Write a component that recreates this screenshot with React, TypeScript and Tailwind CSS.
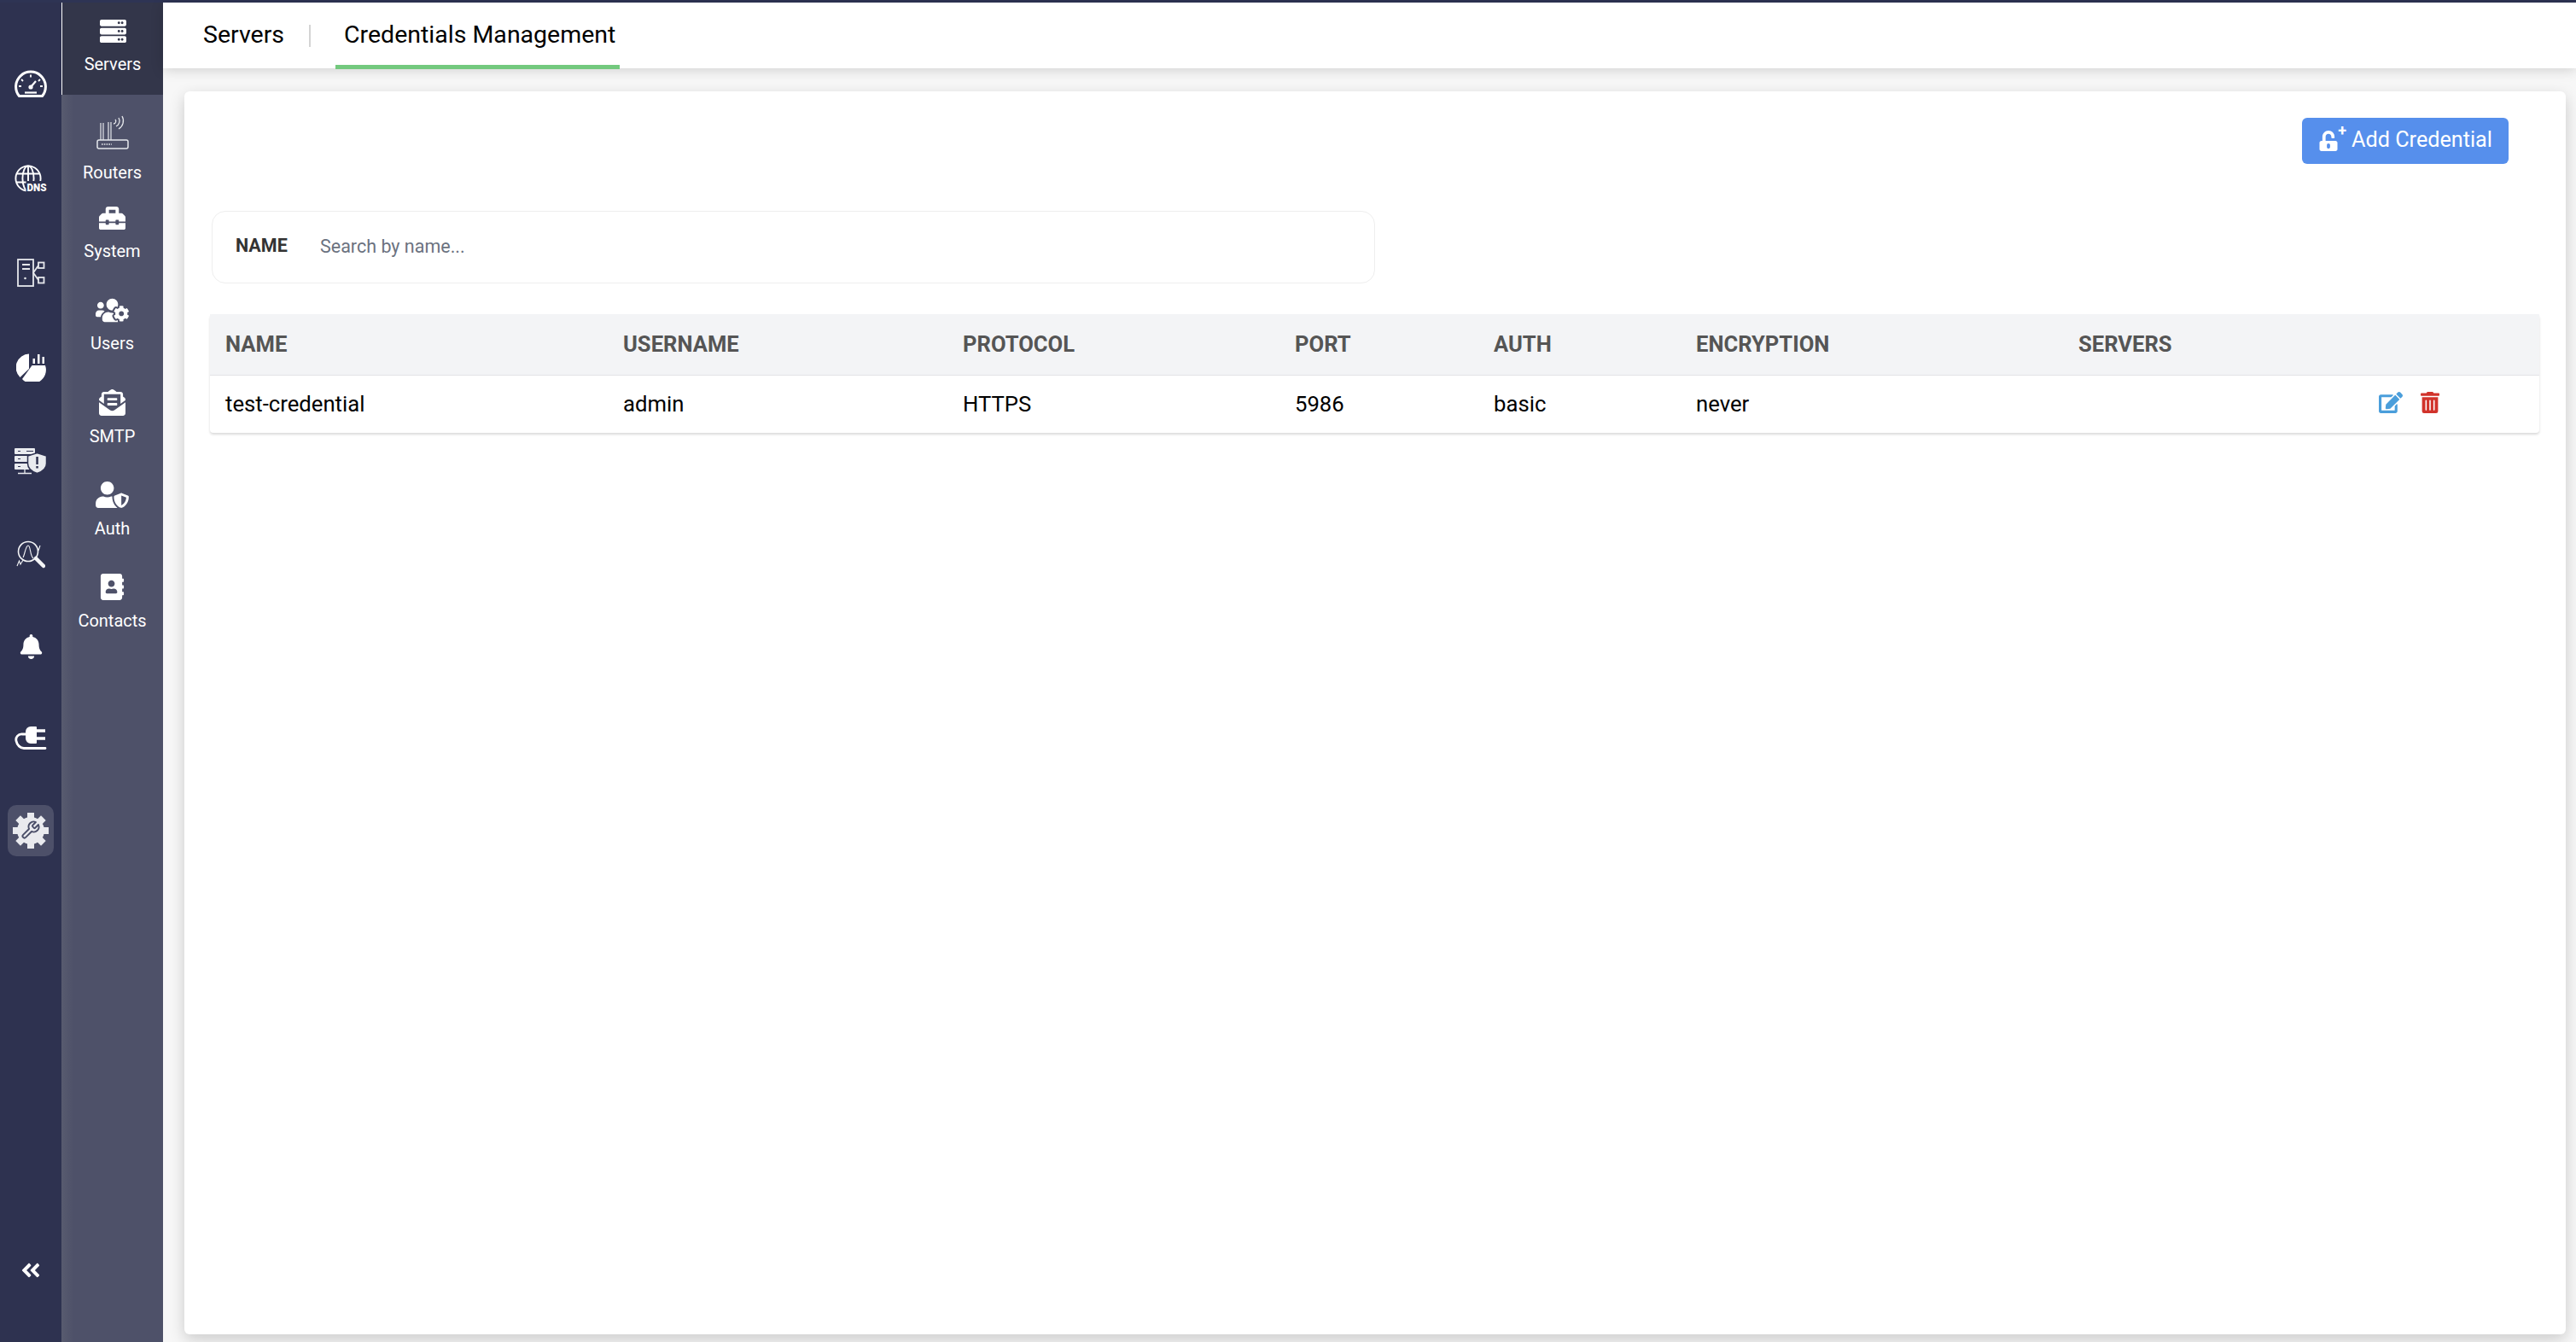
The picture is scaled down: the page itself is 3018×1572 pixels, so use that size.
import type { ReactNode } from "react";
import {
  FaAddressBook,
  FaAngleDoubleLeft,
  FaBell,
  FaEdit,
  FaEnvelopeOpenText,
  FaServer,
  FaToolbox,
  FaTrashAlt,
  FaUnlockAlt,
  FaUserShield,
  FaUsersCog,
} from "react-icons/fa";

const GaugeIcon = () => (
  <svg width="38" height="32" viewBox="0 0 38 32" fill="none" stroke="#fff">
    <path d="M5.5 30.5A17.4 17.4 0 1 1 32.5 30.5Z" strokeWidth="3" strokeLinejoin="round" />
    <path d="M12 26.5h14" strokeWidth="2.2" />
    <path d="M19 20l6-7" strokeWidth="2.2" />
    <circle cx="19" cy="20" r="2.6" fill="#fff" stroke="none" />
    <path d="M19 5.5v3M8 11l2 2M30 11l-2 2M5 19h3M33 19h-3" strokeWidth="1.8" />
  </svg>
);

const DnsIcon = () => (
  <svg width="38" height="36" viewBox="0 0 38 36" fill="none" stroke="#fff" strokeWidth="1.9" className="mt-[4px]">
    <circle cx="16" cy="16" r="14.6" />
    <ellipse cx="16" cy="16" rx="6.6" ry="14.6" />
    <path d="M16 1v30M2 10.500h28M2 20.500h28" />
    <rect x="13.500" y="19" width="25" height="14" fill="#2e3250" stroke="none" />
    <text
      x="14.500"
      y="31"
      fill="#fff"
      stroke="none"
      fontSize="12.500"
      fontWeight="900"
      fontFamily="Roboto, sans-serif"
      textLength="23"
      lengthAdjust="spacingAndGlyphs"
    >
      DNS
    </text>
  </svg>
);

const TopologyIcon = () => (
  <svg width="33" height="33" viewBox="0 0 33 33" fill="none" stroke="#e5e7eb" strokeWidth="1.8">
    <rect x="1" y="1" width="18" height="31" />
    <path d="M6 7h9M6 12h9" strokeWidth="2" />
    <circle cx="9.500" cy="23" r="1.300" fill="#e5e7eb" stroke="none" />
    <rect x="25" y="4.500" width="6.500" height="6.500" />
    <rect x="25" y="22" width="6.500" height="6.500" />
    <path d="M25 8l-6 8.500 6 8.500" />
  </svg>
);

const PieIcon = () => (
  <svg width="35" height="34" viewBox="0 0 35 34" fill="#fff">
    <path d="M15 1.500A16 16 0 0 0 4.500 29L15 19Z" />
    <path d="M7 31A16 16 0 0 0 34 15H18.500Z" />
    <rect x="19.500" y="7" width="2.500" height="6" />
    <rect x="25" y="2" width="2.500" height="11" />
    <rect x="30.500" y="5" width="2.500" height="8" />
  </svg>
);

const ServerShieldIcon = () => (
  <svg width="38" height="31" viewBox="0 0 38 31" fill="#e9ebef">
    <rect x="0" y="0" width="24" height="7" rx="1" />
    <rect x="0" y="9" width="24" height="7" rx="1" />
    <rect x="0" y="18" width="22" height="7" rx="1" />
    <path d="M4 3.500h3M4 12.500h3M4 21.500h3M14 3.500h8" stroke="#2e3250" strokeWidth="1.200" />
    <path d="M4 29.500h16M12 25v4" stroke="#e9ebef" strokeWidth="1.300" />
    <path d="M26.500 5.500l11 3.500v9c0 5.500-5 9.500-11 11.500-6-2-11-6-11-11.500V9Z" stroke="#2e3250" strokeWidth="1.500" />
    <rect x="25.300" y="10" width="2.500" height="9" fill="#2e3250" />
    <rect x="25.300" y="21" width="2.500" height="2.500" fill="#2e3250" />
  </svg>
);

const SearchGraphIcon = () => (
  <svg width="34" height="34" viewBox="0 0 34 34" fill="none" stroke="#f3f4f6">
    <circle cx="14" cy="13" r="11.500" strokeWidth="1.600" />
    <path d="M8 20c2-3 3-14 6-14s2 12 6 15" strokeWidth="1.100" />
    <path d="M23 21l9 9" strokeWidth="4.500" strokeLinecap="round" />
    <path d="M1 30l2.500-6 1.500 4 3-5M26 12l2-6" strokeWidth="1.100" />
  </svg>
);

const PlugIcon = () => (
  <svg width="38" height="29" viewBox="0 0 38 29" fill="none" stroke="#fff">
    <path d="M19 1h6a1 1 0 0 1 1 1v18a1 1 0 0 1-1 1h-6a6 6 0 0 1-6-6V7a6 6 0 0 1 6-6Z" fill="#fff" stroke="none" />
    <path d="M26 6h10M26 15h10" strokeWidth="3.600" />
    <path d="M14 10H9a6.500 6.500 0 0 0-7 8c1 5 5 8.500 9 8.500h25" strokeWidth="2.800" strokeLinecap="round" />
  </svg>
);

const GearWrenchIcon = () => (
  <svg width="42" height="42" viewBox="0 0 42 42">
    <circle cx="21" cy="21" r="16" fill="#e9eaee" />
    {[0, 45, 90, 135, 180, 225, 270, 315].map((a) => (
      <rect key={a} x="17" y="0" width="8" height="8" fill="#e9eaee" transform={`rotate(${a} 21 21)`} />
    ))}
    <g transform="translate(8.500 8.500)" fill="none" stroke="#4a4e68" strokeWidth="1.900" strokeLinejoin="round">
      <path d="M14.700 6.300a1 1 0 0 0 0 1.400l1.600 1.600a1 1 0 0 0 1.400 0l3.770-3.770a6 6 0 0 1-7.940 7.940l-6.910 6.910a2.120 2.120 0 0 1-3-3l6.910-6.910a6 6 0 0 1 7.940-7.940l-3.760 3.760z" />
    </g>
  </svg>
);

const RouterIcon = () => (
  <svg width="38" height="40" viewBox="0 0 38 40" fill="none" stroke="#e5e7eb">
    <rect x="1" y="29" width="36" height="10" rx="2" strokeWidth="1.500" />
    <path d="M6 34h12" strokeWidth="1.600" strokeDasharray="1.600 1.200" />
    <path d="M5 29V9M8 29V9M14 29V8M17 29V8" strokeWidth="1.200" />
    <path d="M20 10a3 3 0 0 0 2-5M23 13a7 7 0 0 0 3-10M26 16a11 11 0 0 0 4-15" strokeWidth="1.300" />
  </svg>
);

const railIcons: { icon: ReactNode; box: string }[] = [
  { icon: <GaugeIcon />, box: "h-[110px]" },
  { icon: <DnsIcon />, box: "h-[111px]" },
  { icon: <TopologyIcon />, box: "h-[111px]" },
  { icon: <PieIcon />, box: "h-[110.500px]" },
  { icon: <ServerShieldIcon />, box: "h-[110px]" },
  { icon: <SearchGraphIcon />, box: "h-[108px]" },
  { icon: <FaBell className="size-[29px] text-white" />, box: "h-[107px]" },
  { icon: <PlugIcon />, box: "h-[107.500px]" },
];

const subItems: { label: string; icon: ReactNode; box: string; gap: string }[] = [
  { label: "Routers", icon: <RouterIcon />, box: "h-[111px] pt-[24px]", gap: "mt-[15px]" },
  { label: "System", icon: <FaToolbox className="size-[31px] text-white" />, box: "h-[108px] pt-[18px]", gap: "mt-[11px]" },
  { label: "Users", icon: <FaUsersCog className="h-[33px] w-[39px] text-white" />, box: "h-[108px] pt-[17px]", gap: "mt-[10px]" },
  { label: "SMTP", icon: <FaEnvelopeOpenText className="size-[31px] text-white" />, box: "h-[108px] pt-[18px]", gap: "mt-[12px]" },
  { label: "Auth", icon: <FaUserShield className="h-[31px] w-[39px] text-white" />, box: "h-[108px] pt-[18px]", gap: "mt-[12px]" },
  { label: "Contacts", icon: <FaAddressBook className="h-[31px] w-[31px] text-white" />, box: "h-[108px] pt-[18px]", gap: "mt-[12px]" },
];

const columns = [
  { label: "NAME", value: "test-credential", width: "w-[466px]" },
  { label: "USERNAME", value: "admin", width: "w-[398px]" },
  { label: "PROTOCOL", value: "HTTPS", width: "w-[389px]" },
  { label: "PORT", value: "5986", width: "w-[233px]" },
  { label: "AUTH", value: "basic", width: "w-[237px]" },
  { label: "ENCRYPTION", value: "never", width: "w-[448px]" },
  { label: "SERVERS", value: "", width: "w-[352px]" },
];

export default function App() {
  return (
    <div className="flex h-screen w-screen flex-col overflow-hidden bg-[#f7f7f7] font-['Roboto',sans-serif]">
      <div className="h-[3px] shrink-0 bg-[#2e3454]" />
      <div className="flex min-h-0 flex-1">
        {/* icon rail */}
        <aside className="flex w-[72px] shrink-0 flex-col items-center bg-[#2e3250] pt-[40px]">
          {railIcons.map((item, i) => (
            <div key={i} className={`flex w-full items-center justify-center ${item.box}`}>
              {item.icon}
            </div>
          ))}
          <div className="mt-[25px] flex h-[60px] w-[54px] items-center justify-center rounded-[10px] bg-[#4d5069]">
            <GearWrenchIcon />
          </div>
          <FaAngleDoubleLeft className="mt-auto mb-[71px] size-[26px] text-white" />
        </aside>

        {/* sub menu */}
        <nav className="flex w-[119px] shrink-0 flex-col bg-[linear-gradient(90deg,#585b6f_0,#4e5169_14px)] text-[20px] leading-[24px] text-white">
          <div className="flex h-[108px] flex-col items-center border-l-[1px] border-white bg-[#33364a] pt-[18px]">
            <FaServer className="size-[31px]" />
            <span className="mt-[11px]">Servers</span>
          </div>
          {subItems.map((item) => (
            <div key={item.label} className={`flex flex-col items-center ${item.box}`}>
              {item.icon}
              <span className={item.gap}>{item.label}</span>
            </div>
          ))}
        </nav>

        <div className="flex min-w-0 flex-1 flex-col">
          {/* tabs */}
          <header className="relative flex h-[77px] shrink-0 items-center bg-white pl-[47px] text-[28.500px] text-black shadow-[0_2px_14px_rgba(0,0,0,0.16)]">
            <span>Servers</span>
            <span className="ml-[29px] h-[26px] w-[2px] bg-[#d4d4d4]" />
            <span className="relative ml-[29px] flex h-full items-center pr-[5px] pl-[10px]">
              Credentials Management
              <span className="absolute right-0 bottom-[-1px] left-0 h-[5px] bg-[#73c97e]" />
            </span>
          </header>

          {/* content card */}
          <main className="mt-[27px] mr-[12px] mb-[9px] ml-[25px] flex-1 rounded-[6px] bg-white pt-[31px] pr-[31px] pl-[30px] shadow-[0_6px_18px_rgba(0,0,0,0.18)]">
            <div className="flex justify-end pr-[36px]">
              <button className="flex h-[54px] w-[242px] items-center justify-center gap-[7px] rounded-[6px] bg-[#568fec] pb-[2px] text-[25.200px] text-white">
                <span className="relative h-[26px] w-[32px]">
                  <FaUnlockAlt className="absolute bottom-0 left-0 size-[24px]" />
                  <span className="absolute top-[-8px] right-[-1px] text-[18px] leading-[20px] font-bold">+</span>
                </span>
                Add Credential
              </button>
            </div>

            <div className="mt-[55px] ml-[2px] flex h-[85px] w-[1363px] items-center rounded-[16px] border border-[#eeeeee] pl-[27px]">
              <label className="mb-[2px] w-[99px] text-[21.500px] font-bold text-[#333]">NAME</label>
              <input
                placeholder="Search by name..."
                className="flex-1 bg-transparent text-[21.500px] outline-none placeholder:text-[#6b7280]"
              />
            </div>

            <table className="mt-[36px] w-[2729px] table-fixed rounded-[4px] shadow-[0_2px_3px_rgba(0,0,0,0.15)]">
              <thead>
                <tr className="h-[71px] border-b-[1.500px] border-[#e3e3e6] bg-[#f3f4f6]">
                  {columns.map((c) => (
                    <th key={c.label} className={`${c.width} pl-[18px] text-left text-[25.600px] font-bold text-[#555]`}>
                      {c.label}
                    </th>
                  ))}
                  <th />
                </tr>
              </thead>
              <tbody>
                <tr className="h-[68px]">
                  {columns.map((c) => (
                    <td key={c.label} className="pl-[18px] text-[25.700px] text-black">
                      {c.value}
                    </td>
                  ))}
                  <td>
                    <div className="mb-[4px] flex items-center gap-[21px] pl-[18px]">
                      <FaEdit className="h-[25px] w-[28px] text-[#4a9edb]" />
                      <FaTrashAlt className="h-[25px] w-[22px] text-[#d1332b]" />
                    </div>
                  </td>
                </tr>
              </tbody>
            </table>
          </main>
        </div>
      </div>
    </div>
  );
}
